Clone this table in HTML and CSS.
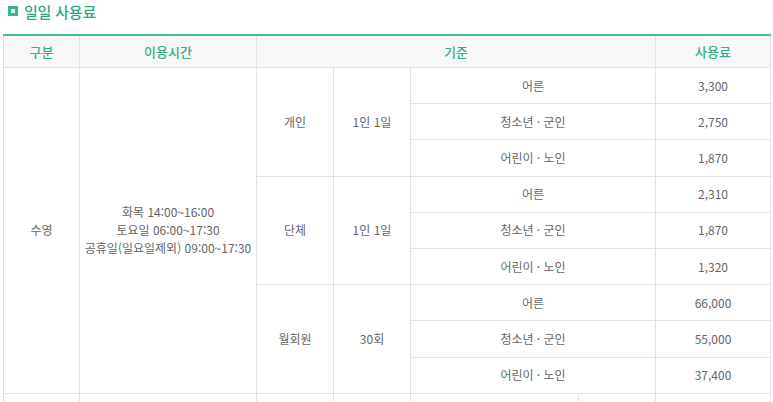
FILE: index.html
```html
<!DOCTYPE html>
<html lang="ko">
<head>
<meta charset="utf-8">
<link rel="stylesheet" href="styles.css">
</head>
<body>
<div class="page">
  <h3 class="title"><span class="title-icon"></span>일일 사용료</h3>
  <table class="fee">
    <colgroup>
      <col class="c1"><col class="c2"><col class="c3"><col class="c4"><col class="c5"><col class="c7">
    </colgroup>
    <thead>
      <tr>
        <th>구분</th>
        <th>이용시간</th>
        <th colspan="3">기준</th>
        <th>사용료</th>
      </tr>
    </thead>
    <tbody>
      <tr>
        <td rowspan="9">수영</td>
        <td rowspan="9">화목 14:00~16:00<br>토요일 06:00~17:30<br>공휴일(일요일제외) 09:00~17:30</td>
        <td rowspan="3">개인</td>
        <td rowspan="3">1인 1일</td>
        <td>어른</td>
        <td>3,300</td>
      </tr>
      <tr><td>청소년 · 군인</td><td>2,750</td></tr>
      <tr><td>어린이 · 노인</td><td>1,870</td></tr>
      <tr>
        <td rowspan="3">단체</td>
        <td rowspan="3">1인 1일</td>
        <td>어른</td>
        <td>2,310</td>
      </tr>
      <tr><td>청소년 · 군인</td><td>1,870</td></tr>
      <tr><td>어린이 · 노인</td><td>1,320</td></tr>
      <tr>
        <td rowspan="3">월회원</td>
        <td rowspan="3">30회</td>
        <td>어른</td>
        <td>66,000</td>
      </tr>
      <tr><td>청소년 · 군인</td><td>55,000</td></tr>
      <tr><td>어린이 · 노인</td><td>37,400</td></tr>
      <tr class="next">
        <td></td><td></td><td></td><td></td>
        <td class="split-cell"><div class="split"><span class="split-a"></span><span class="split-b"></span></div></td>
        <td></td>
      </tr>
    </tbody>
  </table>
</div>
</body>
</html>
```

FILE: styles.css
```css
html, body {
  margin: 0;
  padding: 0;
  background: #ffffff;
}
body {
  font-family: "Noto Sans CJK KR", "Noto Sans", sans-serif;
  color: #666666;
  overflow: hidden;
}
.page {
  padding: 0 3px;
}
.title {
  display: flex;
  align-items: center;
  gap: 6px;
  margin: 0;
  padding: 0 0 0 5px;
  height: 22px;
  font-size: 15px;
  font-weight: 500;
  color: #2fa783;
  letter-spacing: -0.2px;
}
.title-icon {
  width: 4px;
  height: 4px;
  background: #dcf3ea;
  border: 3px solid #36b68e;
  flex: none;
}
.fee {
  margin-top: 12px;
  width: 767px;
  border-collapse: collapse;
  table-layout: fixed;
  border-top: 2px solid #45bd98;
  font-size: 12px;
}
.c1 { width: 76px; }
.c2 { width: 177px; }
.c3 { width: 77px; }
.c4 { width: 77px; }
.c5 { width: 245px; }
.c7 { width: 115px; }
.fee th {
  height: 31px;
  background: #f8f8f8;
  color: #35ad86;
  font-size: 13px;
  font-weight: 500;
  border: 1px solid #e2e2e2;
  border-top: none;
  text-align: center;
  padding: 0;
}
.fee td {
  height: 35.2px;
  border: 1px solid #e2e2e2;
  text-align: center;
  vertical-align: middle;
  padding: 0;
  line-height: 18px;
  color: #666666;
}
.fee td.split-cell {
  vertical-align: top;
}
.split {
  display: flex;
  height: 35px;
}
.split-a {
  width: 167px;
  border-right: 1px solid #e2e2e2;
}
.split-b {
  flex: 1;
}
```
